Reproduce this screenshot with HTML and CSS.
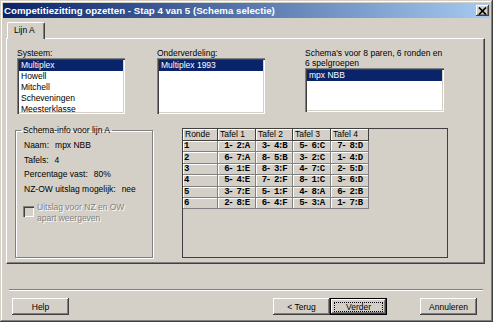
FILE: index.html
```html
<!DOCTYPE html>
<html lang="nl">
<head>
    <meta charset="UTF-8">
    <title>Competitiezitting opzetten</title>
    <link rel="stylesheet" href="styles.css">
</head>
<body>
    <div class="window">
        <div class="titlebar">
            <span class="title">Competitiezitting opzetten - Stap 4 van 5 (Schema selectie)</span>
            <span class="close">
                <svg width="9" height="8" viewBox="0 0 9 8"><path d="M1 0.5 L8 7.5 M8 0.5 L1 7.5" stroke="#000" stroke-width="1.7" fill="none"/></svg>
            </span>
        </div>
        <div class="tabs">
            <div class="tab">Lijn A</div>
        </div>
        <div class="panel">
            <div class="top-row">
                <div class="field field-sys">
                    <div class="label">Systeem:</div>
                    <div class="listbox">
                        <div class="item selected">Multiplex</div>
                        <div class="item">Howell</div>
                        <div class="item">Mitchell</div>
                        <div class="item">Scheveningen</div>
                        <div class="item">Meesterklasse</div>
                    </div>
                </div>
                <div class="field field-ond">
                    <div class="label">Onderverdeling:</div>
                    <div class="listbox">
                        <div class="item selected">Multiplex 1993</div>
                    </div>
                </div>
                <div class="field field-sch">
                    <div class="label">Schema's voor 8 paren, 6 ronden en<br>6 spelgroepen</div>
                    <div class="listbox short">
                        <div class="item selected">mpx NBB</div>
                    </div>
                </div>
            </div>
            <div class="bottom-row">
                <fieldset class="groupbox">
                    <legend>Schema-info voor lijn A</legend>
                    <div class="info">
                        <div class="info-row">Naam:<span class="value">mpx NBB</span></div>
                        <div class="info-row">Tafels:<span class="value">4</span></div>
                        <div class="info-row">Percentage vast:<span class="value">80%</span></div>
                        <div class="info-row">NZ-OW uitslag mogelijk:<span class="value">nee</span></div>
                        <div class="check-row">
                            <span class="checkbox"></span>
                            <span class="check-label">Uitslag voor NZ en OW<br>apart weergeven</span>
                        </div>
                    </div>
                </fieldset>
                <div class="grid">
                    <table>
                        <tr>
                            <th class="col-ronde">Ronde</th>
                            <th class="col-t1">Tafel 1</th>
                            <th class="col-t2">Tafel 2</th>
                            <th class="col-t3">Tafel 3</th>
                            <th class="col-t4">Tafel 4</th>
                        </tr>
                        <tr><td class="ronde">1</td><td>1- 2:A</td><td>3- 4:B</td><td>5- 6:C</td><td>7- 8:D</td></tr>
                        <tr><td class="ronde">2</td><td>6- 7:A</td><td>8- 5:B</td><td>3- 2:C</td><td>1- 4:D</td></tr>
                        <tr><td class="ronde">3</td><td>6- 1:E</td><td>8- 3:F</td><td>4- 7:C</td><td>2- 5:D</td></tr>
                        <tr><td class="ronde">4</td><td>5- 4:E</td><td>7- 2:F</td><td>8- 1:C</td><td>3- 6:D</td></tr>
                        <tr><td class="ronde">5</td><td>3- 7:E</td><td>5- 1:F</td><td>4- 8:A</td><td>6- 2:B</td></tr>
                        <tr><td class="ronde">6</td><td>2- 8:E</td><td>6- 4:F</td><td>5- 3:A</td><td>1- 7:B</td></tr>
                    </table>
                </div>
            </div>
        </div>
        <div class="separator"></div>
        <div class="buttons">
            <button class="btn">Help</button>
            <button class="btn btn-back">&lt; Terug</button>
            <button class="btn btn-default"><span class="focus">Verder</span></button>
            <button class="btn btn-cancel">Annuleren</button>
        </div>
    </div>
</body>
</html>
```

FILE: styles.css
```css
body {
    margin: 0;
    background-color: #d4d0c8;
    color: #000;
    font-family: "Liberation Sans", Arial, sans-serif;
    font-size: 8.5px;
}
.window {
    width: 493px;
    height: 322px;
    box-sizing: border-box;
    padding: 3px;
    display: flex;
    flex-direction: column;
    box-shadow: inset -1px -1px #404040, inset 1px 1px #d4d0c8, inset -2px -2px #808080, inset 2px 2px #fff;
}
.titlebar {
    height: 15px;
    display: flex;
    align-items: center;
    justify-content: space-between;
    padding: 0 1px 0 1px;
    background: linear-gradient(to right, #0a246a, #a6caf0);
    color: #fff;
    font-weight: bold;
    font-size: 9.7px;
}
.close {
    width: 13px;
    height: 11px;
    display: flex;
    align-items: center;
    justify-content: center;
    background-color: #d4d0c8;
    box-shadow: inset -1px -1px #404040, inset 1px 1px #fff, inset -2px -2px #808080;
}
.tabs {
    display: flex;
    height: 16px;
    margin: 4px 5px 0 3px;
}
.tab {
    width: 38px;
    height: 17px;
    box-sizing: border-box;
    margin-left: 1px;
    padding-left: 6px;
    line-height: 15px;
    background-color: #d4d0c8;
    border-top: 1px solid #fff;
    border-left: 1px solid #fff;
    border-right: 1px solid #404040;
    box-shadow: inset -1px 0 #808080;
    border-radius: 2px 2px 0 0;
    position: relative;
    z-index: 1;
}
.panel {
    height: 226px;
    box-sizing: border-box;
    margin: 0 5px 0 3px;
    padding: 9px 0 0 9px;
    border-top: 1px solid #fff;
    border-left: 1px solid #fff;
    border-right: 1px solid #404040;
    border-bottom: 1px solid #404040;
    box-shadow: inset -1px -1px #808080;
}
.top-row {
    display: flex;
    align-items: flex-start;
}
.field-sys {
    margin-left: 1px;
    width: 108px;
}
.field-ond {
    margin-left: 32px;
    width: 108px;
}
.field-sch {
    margin-left: 40px;
    width: 139px;
}
.label {
    line-height: 10px;
}
.listbox {
    height: 56px;
    box-sizing: border-box;
    padding: 2px;
    overflow: hidden;
    background-color: #fff;
    box-shadow: inset 1px 1px #808080, inset 2px 2px #404040, inset -1px -1px #fff, inset -2px -2px #d4d0c8;
}
.listbox.short {
    height: 44px;
}
.item {
    line-height: 11px;
    padding-left: 2px;
    white-space: nowrap;
}
.item.selected {
    background-color: #0a246a;
    color: #fff;
}
.bottom-row {
    display: flex;
    align-items: flex-start;
    margin-top: 11px;
}
.groupbox {
    width: 138px;
    height: 133px;
    box-sizing: border-box;
    margin: 0 0 0 -1px;
    padding: 0;
    border: 1px solid #808080;
    box-shadow: inset 1px 1px #fff, 1px 1px #fff;
}
.groupbox legend {
    margin-left: 5px;
    padding: 0 2px;
    line-height: 10px;
}
.info {
    padding: 3px 0 0 8px;
}
.info-row {
    line-height: 14.5px;
    white-space: nowrap;
}
.value {
    margin-left: 6px;
}
.check-row {
    display: flex;
    align-items: flex-start;
    margin-top: 6px;
    margin-left: -1px;
}
.checkbox {
    width: 11px;
    height: 11px;
    box-sizing: border-box;
    margin-top: 4px;
    margin-right: 3px;
    background-color: #d4d0c8;
    box-shadow: inset 1px 1px #808080, inset 2px 2px #404040, inset -1px -1px #fff, inset -2px -2px #d4d0c8;
}
.check-label {
    line-height: 11px;
    color: #808080;
    text-shadow: 1px 1px #fff;
}
.grid {
    width: 266px;
    height: 130px;
    box-sizing: border-box;
    margin: 3px 0 0 29px;
    border: 1px solid #404040;
    background-color: #d4d0c8;
}
.grid table {
    border-collapse: separate;
    border-spacing: 0;
}
.grid th {
    height: 11px;
    padding: 0 0 0 2px;
    text-align: left;
    font-weight: normal;
    line-height: 11px;
    background-color: #d4d0c8;
    border-right: 1px solid #404040;
    border-bottom: 1px solid #404040;
    box-shadow: inset 1px 1px #fff;
    box-sizing: border-box;
}
.col-ronde { width: 35px; }
.col-t1 { width: 38px; }
.col-t2 { width: 37px; }
.col-t3 { width: 38px; }
.col-t4 { width: 38px; }
.grid td {
    height: 10.4px;
    padding: 0;
    text-align: center;
    line-height: 10px;
    font-family: "Liberation Mono", monospace;
    font-weight: bold;
    font-size: 9px;
    letter-spacing: -1.3px;
    background-color: #d4d0c8;
    border-right: 1px solid #808080;
    border-bottom: 1px solid #808080;
    box-shadow: inset 1px 1px #fff;
    white-space: pre;
}
.grid td.ronde {
    text-align: left;
    padding-left: 1px;
}
.separator {
    margin: 25px 7px 0 6px;
    border-top: 1px solid #808080;
    border-bottom: 1px solid #fff;
}
.buttons {
    display: flex;
    margin: 7px 13px 0 9px;
}
.btn {
    width: 57px;
    height: 17px;
    box-sizing: border-box;
    padding: 0;
    display: flex;
    align-items: center;
    justify-content: center;
    font-family: "Liberation Sans", Arial, sans-serif;
    font-size: 8.5px;
    color: #000;
    background-color: #d4d0c8;
    border: none;
    box-shadow: inset -1px -1px #404040, inset 1px 1px #fff, inset -2px -2px #808080, inset 2px 2px #d4d0c8;
}
.btn-back {
    margin-left: auto;
}
.btn-default {
    border: 1px solid #000;
}
.btn-default .focus {
    width: 49px;
    height: 10px;
    box-sizing: border-box;
    line-height: 8px;
    border: 1px dotted #000;
    text-align: center;
}
.btn-cancel {
    margin-left: 33px;
}
```
